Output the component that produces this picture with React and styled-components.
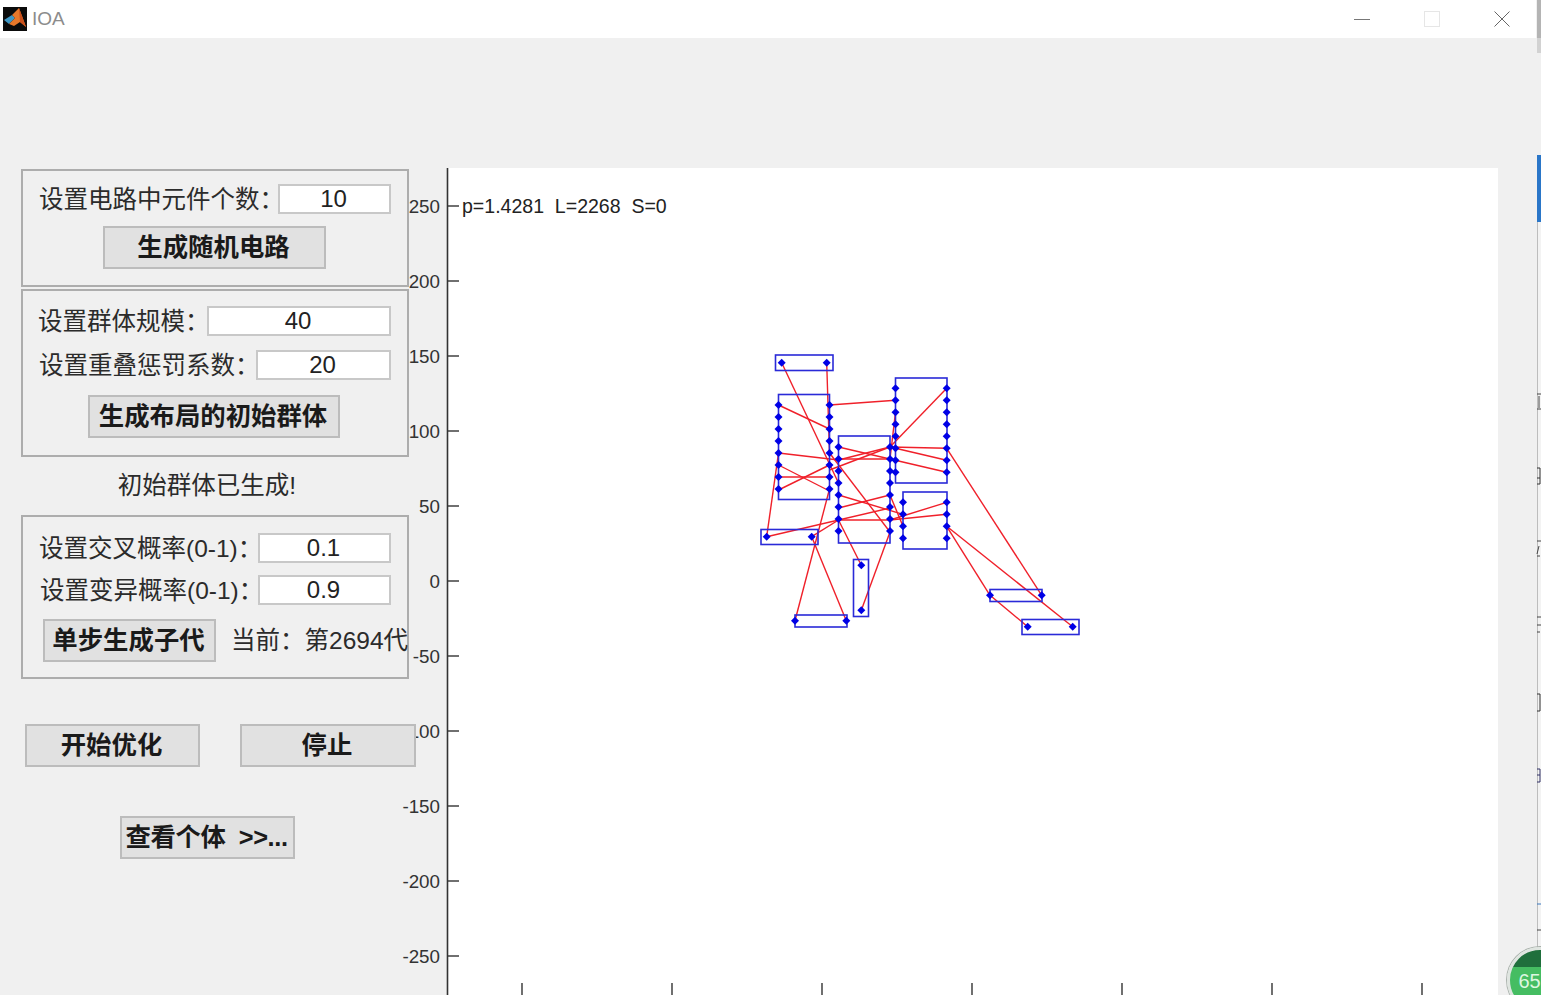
import React from "react";
import styled, { createGlobalStyle } from "styled-components";

const Global = createGlobalStyle`
  html, body { margin: 0; padding: 0; background: #f0f0f0; overflow: hidden; }
  * { box-sizing: border-box; }
`;

const CJK = `"Liberation Sans", "Noto Sans CJK SC", sans-serif`;

const Screen = styled.div`
  position: relative;
  width: 1541px;
  height: 995px;
  overflow: hidden;
  display: flex;
  background: #f0f0f0;
  font-family: ${CJK};
  color: #222;
`;
const Window = styled.div`
  width: 1536px;
  height: 995px;
  display: flex;
  flex-direction: column;
`;
const TitleBar = styled.div`
  height: 38px;
  flex: none;
  background: #fff;
  display: flex;
  align-items: center;
  padding-left: 3px;
`;
const AppTitle = styled.span`
  margin-left: 5px;
  font-size: 19px;
  color: #8c8c8c;
  flex: 1;
`;
const WinButtons = styled.div`
  display: flex;
  align-items: center;
  gap: 54px;
  padding-right: 26px;
`;
const Body = styled.div`
  flex: 1;
  display: flex;
  min-height: 0;
`;
const Controls = styled.div`
  position: relative;
  z-index: 1;
  width: 447px;
  flex: none;
  padding: 131px 0 0 21px;
  display: flex;
  flex-direction: column;
`;
const Panel = styled.div`
  width: 388px;
  height: ${(p) => p.$h}px;
  margin-top: ${(p) => p.$mt || 0}px;
  border: 2px solid #adadad;
  display: flex;
  flex-direction: column;
  padding-top: ${(p) => p.$pt}px;
`;
const Row = styled.div`
  display: flex;
  align-items: center;
  height: ${(p) => p.$h || 30}px;
  margin-top: ${(p) => p.$mt || 0}px;
  padding-left: ${(p) => p.$pl}px;
  padding-right: 16px;
`;
const Label = styled.span`
  font-size: 24.5px;
  line-height: 30px;
  padding-top: 2px;
  white-space: nowrap;
  flex: 1 1 0;
  min-width: 0;
  color: #2b2b2b;
`;
const Field = styled.div`
  width: ${(p) => p.$w}px;
  height: ${(p) => p.$h || 30}px;
  flex: none;
  background: #fff;
  border: 2px solid #c8c8c8;
  padding-right: 2px;
  text-align: center;
  font-size: 24px;
  line-height: 26px;
  color: #222;
`;
const Button = styled.div`
  width: ${(p) => p.$w}px;
  height: 43px;
  flex: none;
  margin-top: ${(p) => p.$mt || 0}px;
  margin-left: ${(p) => p.$ml || 0}px;
  padding-right: 2px;
  background: #e1e1e1;
  border: 2px solid #bcbcbc;
  text-align: center;
  font-size: 25.4px;
  font-weight: 700;
  line-height: 38px;
  letter-spacing: ${(p) => p.$ls || 0}px;
  color: #1a1a1a;
  white-space: pre;
`;
const Status = styled.div`
  height: 58px;
  width: 372px;
  text-align: center;
  font-size: 24.5px;
  line-height: 57px;
  color: #2b2b2b;
`;
const Counter = styled.span`
  margin-left: 15px;
  font-size: 24.5px;
  line-height: 43px;
  white-space: nowrap;
  color: #2b2b2b;
`;
const ButtonRow = styled.div`
  display: flex;
  gap: 40px;
  margin-top: ${(p) => p.$mt}px;
  margin-left: ${(p) => p.$ml}px;
`;
const Plot = styled.div`
  width: 1051px;
  margin-top: 130px;
  background: #fff;
  flex: none;
`;
const PlotSvg = styled.svg`
  display: block;
  overflow: visible;
`;
const Edge = styled.div`
  width: 5px;
  flex: none;
`;
const EdgeSvg = styled.svg`
  display: block;
`;
const Badge = styled.div`
  position: absolute;
  left: 1507px;
  top: 947px;
  width: 66px;
  height: 66px;
  border-radius: 50%;
  border: 3px solid #dfe5e0;
  box-shadow: 0 0 0 1px #a8b0aa;
  background: linear-gradient(#1f6f3c 0 28%, #45bd62 28% 100%);
  color: #dcf7e0;
  font-size: 20px;
  line-height: 24px;
  padding: 19px 0 0 8.5px;
`;

const rects = [
  [775.5, 355, 57.5, 15.5],
  [778.5, 394.5, 51, 105],
  [838.5, 436, 51.5, 107],
  [895.5, 378, 51.5, 105],
  [903, 492, 44, 57],
  [761, 529.5, 57, 15],
  [853.5, 559.5, 15, 57],
  [795, 615, 52, 12],
  [990, 589.5, 52, 12],
  [1022, 619.5, 57, 15],
];

const column = (x, y0, n) => Array.from({ length: n }, (_, i) => [x, y0 + i * 12]);
const pins = [
  [781.7, 362.7], [826.7, 362.7],
  ...column(778.5, 405, 8),
  ...column(829.5, 405, 8),
  ...column(838.5, 447, 8),
  ...column(890, 447, 8),
  ...column(895.5, 388.3, 8),
  ...column(946.7, 388.3, 8),
  ...column(903, 502.3, 4),
  ...column(946.7, 502.3, 4),
  [766.7, 536.7], [811.7, 536.7],
  [861.3, 565.3], [861.3, 610.3],
  [795, 620.7], [846.3, 620.7],
  [990, 595.3], [1041.7, 595.3],
  [1027.7, 626.7], [1072.7, 626.7],
];

const wires = [
  [781.7, 362.7, 838.5, 483],
  [826.7, 362.7, 829.5, 453],
  [829.5, 405, 895.5, 400.3],
  [778.5, 405, 829.5, 429],
  [829.5, 453, 890, 532],
  [778.5, 453, 838.5, 460],
  [838.5, 459, 890, 459],
  [778.5, 465, 829.5, 491],
  [778.5, 490, 829.5, 465],
  [778.5, 477, 829.5, 477],
  [838.5, 447, 946.7, 472.3],
  [838.5, 460, 890, 447],
  [829.5, 470, 890, 447],
  [895.5, 412, 890, 459],
  [946.7, 388.3, 890, 447],
  [890, 447, 946.7, 448.3],
  [895.5, 448.3, 946.7, 460.3],
  [946.7, 448.3, 1041.7, 595.3],
  [946.7, 526.3, 990, 595.3],
  [946.7, 526.3, 1072.7, 626.7],
  [990, 595.3, 1027.7, 626.7],
  [766.7, 536.7, 890, 508],
  [838.5, 508, 890, 495],
  [838.5, 495, 903, 514.3],
  [890, 495, 903, 526.3],
  [838.5, 520, 890, 520],
  [890, 520, 946.7, 502.3],
  [890, 520, 946.7, 514.3],
  [778.5, 453, 766.7, 536.7],
  [811.7, 536.7, 846.3, 620.7],
  [829.5, 489, 795, 620.7],
  [890, 532, 861.3, 610.3],
  [838.5, 520, 861.3, 565.3],
  [811.7, 536.7, 838.5, 520],
];

const yTicks = [
  [250, 206], [200, 281], [150, 356], [100, 431], [50, 506], [0, 581],
  [-50, 656], [-100, 731], [-150, 806], [-200, 881], [-250, 956],
];
const xTicks = [522, 672, 822, 972, 1122, 1272, 1422];

function Chart() {
  return (
    <PlotSvg width="1051" height="827" viewBox="447 168 1051 827">
      <line x1="447.5" y1="168" x2="447.5" y2="995" stroke="#333" strokeWidth="1.6" />
      {yTicks.map(([v, y]) => (
        <g key={v}>
          <line x1="447" y1={y} x2="459" y2={y} stroke="#333" strokeWidth="1.4" />
          <text x="440" y={y + 7} textAnchor="end" fontFamily="Liberation Sans" fontSize="18.8" fill="#333">{v}</text>
        </g>
      ))}
      {xTicks.map((x) => (
        <line key={x} x1={x} y1="983" x2={x} y2="995" stroke="#333" strokeWidth="1.4" />
      ))}
      <text x="462" y="213" fontFamily="Liberation Sans" fontSize="19.55" fill="#222" xmlSpace="preserve">p=1.4281  L=2268  S=0</text>
      {wires.map(([a, b, c, d], i) => (
        <line key={i} x1={a} y1={b} x2={c} y2={d} stroke="#f0202a" strokeWidth="1.4" />
      ))}
      {rects.map(([x, y, w, h], i) => (
        <rect key={i} x={x} y={y} width={w} height={h} fill="none" stroke="#2a2ad8" strokeWidth="1.6" />
      ))}
      {pins.map(([x, y], i) => (
        <path key={i} d={`M${x - 4} ${y}L${x} ${y - 4}L${x + 4} ${y}L${x} ${y + 4}Z`} fill="#0000e6" />
      ))}
    </PlotSvg>
  );
}

const MatlabIcon = () => (
  <svg width="24" height="24" viewBox="0 0 24 24">
    <rect width="24" height="24" fill="#0b0b0b" />
    <path d="M1 13L9 8L12 11L6 17Z" fill="#3f97c4" />
    <path d="M9 8L16 1L19 9L23 20L17 15L11 19L6 17L12 11Z" fill="#e8782a" />
    <path d="M16 1L19 9L23 20L17 15Z" fill="#c9501c" />
  </svg>
);

const WinGlyphs = () => (
  <>
    <svg width="16" height="16" viewBox="0 0 16 16"><line x1="0" y1="8.5" x2="16" y2="8.5" stroke="#777" /></svg>
    <svg width="16" height="16" viewBox="0 0 16 16"><rect x="0.5" y="0.5" width="15" height="15" fill="none" stroke="#e6e6e6" /></svg>
    <svg width="16" height="16" viewBox="0 0 16 16"><path d="M0.5 0.5L15.5 15.5M15.5 0.5L0.5 15.5" stroke="#666" fill="none" /></svg>
  </>
);

const EdgeMarks = () => (
  <EdgeSvg width="5" height="995" viewBox="0 0 5 995">
    <rect x="1" y="0" width="4" height="38" fill="#b4b4b4" />
    <rect x="1" y="38" width="4" height="15" fill="#d2d2d2" />
    <rect x="1" y="155" width="4" height="67" fill="#2a76c8" />
    <rect x="1" y="222" width="4" height="773" fill="#f3f3f3" />
    <line x1="1.5" y1="222" x2="1.5" y2="995" stroke="#bdbdbd" />
    <path d="M1 394h4M1 409h4M3 396v12" stroke="#444" fill="none" />
    <path d="M1 468h3v16h-3M1 478h3" stroke="#333" fill="none" />
    <path d="M1 541h4M1 556h3M3 546l-2 8" stroke="#444" fill="none" />
    <path d="M1 617h4M1 625h4M1 632h3" stroke="#444" fill="none" />
    <path d="M1 694h3v17h-3" stroke="#333" fill="none" />
    <path d="M1 769h3v13h-3M1 775h3" stroke="#336" fill="none" />
    <line x1="1" y1="904" x2="5" y2="904" stroke="#3a78c0" />
    <line x1="1" y1="930" x2="5" y2="930" stroke="#444" />
  </EdgeSvg>
);

export default function App() {
  return (
    <>
      <Global />
      <Screen>
        <Window>
          <TitleBar>
            <MatlabIcon />
            <AppTitle>IOA</AppTitle>
            <WinButtons><WinGlyphs /></WinButtons>
          </TitleBar>
          <Body>
            <Controls>
              <Panel $h={118} $pt={13}>
                <Row $pl={16}><Label>设置电路中元件个数：</Label><Field $w={113}>10</Field></Row>
                <Button $w={223} $mt={12} $ml={80}>生成随机电路</Button>
              </Panel>
              <Panel $h={168} $mt={2} $pt={15}>
                <Row $pl={15}><Label>设置群体规模：</Label><Field $w={184}>40</Field></Row>
                <Row $pl={16} $mt={14}><Label>设置重叠惩罚系数：</Label><Field $w={135}>20</Field></Row>
                <Button $w={252} $mt={15} $ml={65}>生成布局的初始群体</Button>
              </Panel>
              <Status>初始群体已生成!</Status>
              <Panel $h={164} $pt={16}>
                <Row $pl={16}><Label>设置交叉概率(0-1)：</Label><Field $w={133}>0.1</Field></Row>
                <Row $pl={17} $mt={12}><Label>设置变异概率(0-1)：</Label><Field $w={133}>0.9</Field></Row>
                <Row $pl={20} $h={43} $mt={14}>
                  <Button $w={173}>单步生成子代</Button>
                  <Counter>当前：第2694代</Counter>
                </Row>
              </Panel>
              <ButtonRow $mt={45} $ml={4}>
                <Button $w={175}>开始优化</Button>
                <Button $w={176}>停止</Button>
              </ButtonRow>
              <ButtonRow $mt={49} $ml={99}>
                <Button $w={175} $ls={-0.4}>查看个体  &gt;&gt;...</Button>
              </ButtonRow>
            </Controls>
            <Plot><Chart /></Plot>
          </Body>
        </Window>
        <Edge><EdgeMarks /></Edge>
        <Badge>65</Badge>
      </Screen>
    </>
  );
}
